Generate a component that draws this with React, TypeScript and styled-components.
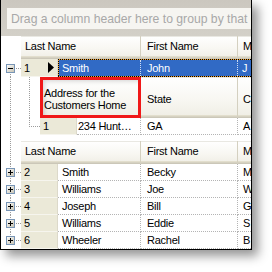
import React from "react";
import styled, { createGlobalStyle, css } from "styled-components";

const GlobalStyle = createGlobalStyle`
  html, body { margin: 0; padding: 0; background: #ffffff; }
  #root { width: 272px; height: 272px; overflow: hidden; }
`;

const FONT = `"Liberation Sans", Arial, sans-serif`;
const DOT = "#b4b4b4";
const TREE = "#9c9c9c";

type Line = "none" | "full" | "top" | "bottom";

const vLine = (x: number, mode: Line): string | null => {
  const g = `repeating-linear-gradient(to bottom, ${TREE} 0 1px, transparent 1px 2px)`;
  if (mode === "full") return `${g} ${x}px 0 / 1px 100% no-repeat`;
  if (mode === "top") return `${g} ${x}px 0 / 1px 50% no-repeat`;
  if (mode === "bottom") return `${g} ${x}px 100% / 1px 50% no-repeat`;
  return null;
};

const hLine = (x: number): string =>
  `repeating-linear-gradient(to right, ${TREE} 0 1px, transparent 1px 2px) ${x}px 50% / calc(100% - ${x}px) 1px no-repeat`;

const Page = styled.div`
  width: 272px;
  height: 272px;
  background: #fff;
`;

const Frame = styled.div`
  width: 250px;
  border: 1px solid #000;
  border-top: none;
  background: #fff;
  box-shadow: 6px 6px 10px rgba(0, 0, 0, 0.42);
  overflow: hidden;
  font-family: ${FONT};
  font-size: 11px;
  letter-spacing: -0.25px;
  color: #000;
`;

const GroupByArea = styled.div`
  height: 36px;
  box-sizing: border-box;
  padding: 8px 0 0 6px;
  background: linear-gradient(to bottom, #cbc7bf, #d3d0c8);
`;

const GroupByPrompt = styled.div`
  height: 21px;
  display: flex;
  align-items: center;
  padding-left: 4px;
  background: #f6f5f1;
  font-size: 12.2px;
  letter-spacing: 0;
  color: #a8a8a8;
  white-space: nowrap;
  overflow: hidden;
`;

const Strip = styled.div<{ $h?: number }>`
  display: flex;
  ${(p) => (p.$h ? `height: ${p.$h}px;` : "")}
`;

const Gutter = styled.div<{ $w: number; $x: number; $line: Line; $branch?: boolean }>`
  flex: 0 0 ${(p) => p.$w}px;
  box-sizing: border-box;
  display: flex;
  align-items: center;
  padding-left: ${(p) => p.$x - 4}px;
  background: ${(p) =>
    [vLine(p.$x, p.$line), p.$branch ? hLine(p.$x) : null].filter(Boolean).join(", ") || "none"};
`;

const ExpanderSvg = styled.svg`
  display: block;
  flex: none;
`;

const Expander = ({ open }: { open?: boolean }) => (
  <ExpanderSvg width="9" height="9" viewBox="0 0 9 9">
    <defs>
      <linearGradient id="expGrad" x1="0" y1="0" x2="1" y2="1">
        <stop offset="0" stopColor="#ffffff" />
        <stop offset="1" stopColor="#c3bfae" />
      </linearGradient>
    </defs>
    <rect x="0.5" y="0.5" width="8" height="8" fill="url(#expGrad)" stroke="#7895b6" />
    <path d="M2 4.5h5" stroke="#000" />
    {!open && <path d="M4.5 2v5" stroke="#000" />}
  </ExpanderSvg>
);

const HeaderCell = styled.div<{ $w: number; $pl: number; $pt?: number; $mark?: boolean; $last?: boolean }>`
  flex: 0 0 ${(p) => p.$w}px;
  box-sizing: border-box;
  display: flex;
  align-items: center;
  padding: ${(p) => p.$pt ?? 0}px 0 3px ${(p) => p.$pl}px;
  background: linear-gradient(to bottom, #ffffff 0%, #f8f7f2 55%, #efede4 100%);
  border-right: ${(p) => (p.$last ? "none" : "1px solid #d4d0c0")};
  box-shadow: inset 0 -1px 0 #cbc7b8, inset 0 -2px 0 #d6d2c2, inset 0 -3px 0 #e2decd,
    inset 0 1px 0 #e9e8e2;
  white-space: nowrap;
  overflow: hidden;
  line-height: 12px;
  ${(p) =>
    p.$mark &&
    css`
      outline: 3px solid #f01818;
      outline-offset: -3px;
      box-shadow: inset 0 -1px 0 #cbc7b8, inset 0 -2px 0 #d6d2c2, inset 4px 4px 5px rgba(0, 0, 0, 0.18);
    `}
`;

const Selector = styled.div`
  flex: 0 0 37px;
  box-sizing: border-box;
  display: flex;
  align-items: center;
  justify-content: space-between;
  padding: 0 3px 0 3px;
  background: #ebe9d8;
  border-bottom: 1px solid #f6f5ee;
  border-right: 1px solid #dcd9ca;
`;

const Arrow = styled.svg`
  display: block;
  flex: none;
`;

const Cell = styled.div<{ $w: number; $pl: number; $last?: boolean }>`
  flex: 0 0 ${(p) => p.$w}px;
  box-sizing: border-box;
  display: flex;
  align-items: center;
  padding-left: ${(p) => p.$pl}px;
  border-right: ${(p) => (p.$last ? "none" : `1px dotted ${DOT}`)};
  border-bottom: 1px dotted ${DOT};
  white-space: nowrap;
  overflow: hidden;
`;

const EllipsisText = styled.span`
  display: block;
  overflow: hidden;
  text-overflow: ellipsis;
  white-space: nowrap;
  padding-right: 4px;
`;

const focusH = "repeating-linear-gradient(to right, #000 0 1px, #f2a330 1px 2px)";
const focusV = "repeating-linear-gradient(to bottom, #000 0 1px, #f2a330 1px 2px)";

const ActiveCells = styled.div`
  flex: 1 1 auto;
  display: flex;
  box-sizing: border-box;
  padding: 1px 0 1px 1px;
  background: ${focusH} 0 0 / 100% 1px no-repeat, ${focusH} 0 100% / 100% 1px no-repeat,
    ${focusV} 0 0 / 1px 100% no-repeat, #316ac5;
  color: #fff;
`;

const ActiveCell = styled.div<{ $w: number; $pl: number; $last?: boolean }>`
  flex: 0 0 ${(p) => p.$w}px;
  box-sizing: border-box;
  display: flex;
  align-items: center;
  padding-left: ${(p) => p.$pl}px;
  border-right: ${(p) => (p.$last ? "none" : "1px dotted #cfdcf2")};
  white-space: nowrap;
  overflow: hidden;
`;

const ChildBand = styled.div`
  flex: 1 1 auto;
  display: flex;
  flex-direction: column;
  padding-bottom: 6px;
`;

const Lines = styled.div`
  display: flex;
  flex-direction: column;
`;

const rows = [
  { n: "2", last: "Smith", first: "Becky", next: "M" },
  { n: "3", last: "Williams", first: "Joe", next: "W" },
  { n: "4", last: "Joseph", first: "Bill", next: "G" },
  { n: "5", last: "Williams", first: "Eddie", next: "S" },
  { n: "6", last: "Wheeler", first: "Rachel", next: "B" },
];

const BandHeader = ({ line }: { line: Line }) => (
  <Strip $h={23}>
    <Gutter $w={20} $x={9} $line={line} />
    <HeaderCell $w={120} $pl={4}>Last Name</HeaderCell>
    <HeaderCell $w={97} $pl={6}>First Name</HeaderCell>
    <HeaderCell $w={13} $pl={5} $last>M</HeaderCell>
  </Strip>
);

export default function App() {
  return (
    <Page>
      <GlobalStyle />
      <Frame>
        <GroupByArea>
          <GroupByPrompt>Drag a column header here to group by that column</GroupByPrompt>
        </GroupByArea>

        <BandHeader line="none" />

        <Strip $h={18}>
          <Gutter $w={20} $x={9} $line="bottom" $branch>
            <Expander open />
          </Gutter>
          <Selector>
            <span>1</span>
            <Arrow width="6" height="11" viewBox="0 0 6 11">
              <path d="M0 0 L6 5.5 L0 11 Z" fill="#000" />
            </Arrow>
          </Selector>
          <ActiveCells>
            <ActiveCell $w={82} $pl={3}>Smith</ActiveCell>
            <ActiveCell $w={97} $pl={6}>John</ActiveCell>
            <ActiveCell $w={13} $pl={4} $last>J</ActiveCell>
          </ActiveCells>
        </Strip>

        <Strip>
          <Gutter $w={20} $x={9} $line="full" />
          <ChildBand>
            <Strip $h={41}>
              <Gutter $w={19} $x={8} $line="full" />
              <HeaderCell $w={101} $pl={4} $pt={5} $mark>
                Address for the
                <br />
                Customers Home
              </HeaderCell>
              <HeaderCell $w={97} $pl={6} $pt={5}>State</HeaderCell>
              <HeaderCell $w={13} $pl={5} $pt={5} $last>C</HeaderCell>
            </Strip>
            <Strip $h={17}>
              <Gutter $w={19} $x={8} $line="top" $branch />
              <Selector>
                <span>1</span>
              </Selector>
              <Cell $w={64} $pl={1}>
                <EllipsisText>234 Hunter Ridge Rd</EllipsisText>
              </Cell>
              <Cell $w={97} $pl={6}>GA</Cell>
              <Cell $w={13} $pl={5} $last>A</Cell>
            </Strip>
          </ChildBand>
        </Strip>

        <BandHeader line="full" />

        <Lines>
          {rows.map((r, i) => (
            <Strip $h={17} key={r.n}>
              <Gutter $w={20} $x={9} $line={i === rows.length - 1 ? "top" : "full"} $branch>
                <Expander />
              </Gutter>
              <Selector>
                <span>{r.n}</span>
              </Selector>
              <Cell $w={83} $pl={4}>{r.last}</Cell>
              <Cell $w={97} $pl={6}>{r.first}</Cell>
              <Cell $w={13} $pl={5} $last>{r.next}</Cell>
            </Strip>
          ))}
        </Lines>
      </Frame>
    </Page>
  );
}
